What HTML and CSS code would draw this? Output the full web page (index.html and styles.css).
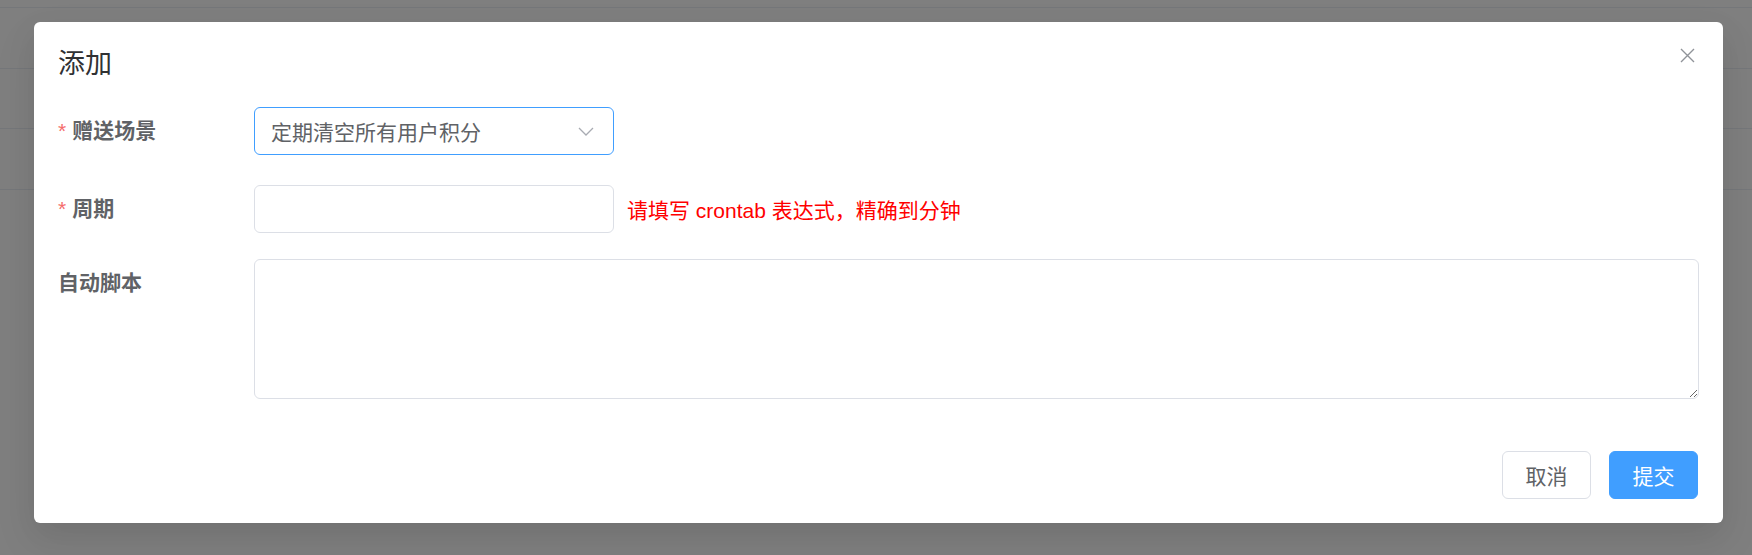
FILE: index.html
```html
<!DOCTYPE html>
<html lang="zh-CN">
<head>
<meta charset="utf-8">
<title>添加</title>
<link rel="stylesheet" href="styles.css">
</head>
<body>
<div class="page">
  <div class="page-row"></div>
  <div class="page-row"></div>
  <div class="page-row"></div>
  <div class="page-row"></div>
</div>
<div class="overlay">
  <div class="dialog">
    <div class="dialog-header">
      <span class="dialog-title">添加</span>
      <button class="dialog-close" type="button" aria-label="关闭">
        <svg width="15" height="15" viewBox="0 0 15 15"><path d="M1 1 L14 14 M14 1 L1 14" stroke="#909399" stroke-width="1.4" fill="none"/></svg>
      </button>
    </div>
    <div class="dialog-body">
      <div class="form-item item-scene">
        <label class="form-label"><span class="req">*</span>赠送场景</label>
        <div class="form-content">
          <div class="select">
            <span class="select-value">定期清空所有用户积分</span>
            <svg class="select-arrow" width="16" height="9" viewBox="0 0 16 9"><path d="M1 1 L8 8 L15 1" stroke="#a8abb2" stroke-width="1.3" fill="none"/></svg>
          </div>
        </div>
      </div>
      <div class="form-item item-cycle">
        <label class="form-label"><span class="req">*</span>周期</label>
        <div class="form-content">
          <input class="input" type="text">
          <span class="hint">请填写 crontab 表达式，精确到分钟</span>
        </div>
      </div>
      <div class="form-item item-script">
        <label class="form-label">自动脚本</label>
        <div class="form-content">
          <textarea class="textarea"></textarea>
        </div>
      </div>
    </div>
    <div class="dialog-footer">
      <button class="btn btn-default" type="button">取消</button>
      <button class="btn btn-primary" type="button">提交</button>
    </div>
  </div>
</div>
</body>
</html>
```

FILE: styles.css
```css
* {
  box-sizing: border-box;
}

html, body {
  margin: 0;
  padding: 0;
  height: 555px;
  overflow: hidden;
}

body {
  background: #ffffff;
  font-family: "Liberation Sans", "Noto Sans CJK SC", sans-serif;
  position: relative;
}

.page {
  display: flex;
  flex-direction: column;
  padding-top: 7px;
}

.page-row {
  height: 60.5px;
  border-top: 1px solid #ebeef5;
}

.overlay {
  position: absolute;
  inset: 0;
  background: rgba(0, 0, 0, 0.5);
}

.dialog {
  position: absolute;
  left: 34px;
  top: 22px;
  width: 1689px;
  height: 501px;
  background: #ffffff;
  border-radius: 6px;
  padding: 24px;
  box-shadow: 0 18px 48px 6px rgba(0, 0, 0, 0.04), 0 12px 30px rgba(0, 0, 0, 0.08);
  display: flex;
  flex-direction: column;
}

.dialog-header {
  padding-bottom: 25px;
}

.dialog-title {
  display: block;
  font-size: 27px;
  line-height: 36px;
  color: #303133;
}

.dialog-close {
  position: absolute;
  top: 9px;
  right: 12px;
  width: 48px;
  height: 48px;
  border: 0;
  padding: 0;
  background: transparent;
  display: flex;
  align-items: center;
  justify-content: center;
}

.dialog-body {
  display: flex;
  flex-direction: column;
}

.form-item {
  display: grid;
  grid-template-columns: 196px 1fr;
  align-items: start;
}

.item-scene {
  margin-bottom: 30px;
}

.item-cycle {
  margin-bottom: 26px;
}

.form-label {
  font-size: 21px;
  line-height: 48px;
  font-weight: bold;
  color: #606266;
  display: flex;
  align-items: center;
}

.req {
  color: #f56c6c;
  margin-right: 6px;
  font-weight: normal;
}

.form-content {
  display: flex;
  align-items: center;
  gap: 13px;
}

.select {
  width: 360px;
  height: 48px;
  border: 1px solid #409eff;
  border-radius: 6px;
  display: flex;
  align-items: center;
  justify-content: space-between;
  padding: 0 19px 0 16px;
}

.select-value {
  font-size: 21px;
  color: #606266;
}

.input {
  width: 360px;
  height: 48px;
  border: 1px solid #dcdfe6;
  border-radius: 6px;
  background: #ffffff;
  font-size: 21px;
  padding: 0 16px;
  outline: none;
}

.hint {
  font-size: 21px;
  color: #ff0000;
}

.textarea {
  width: 1445px;
  height: 140px;
  border: 1px solid #dcdfe6;
  border-radius: 6px;
  font-size: 21px;
  padding: 8px 16px;
  resize: vertical;
  outline: none;
  font-family: inherit;
}

.dialog-footer {
  margin-top: auto;
  display: flex;
  justify-content: flex-end;
  gap: 18px;
  padding-right: 1px;
}

.btn {
  width: 89px;
  height: 48px;
  border-radius: 6px;
  font-size: 21px;
  font-family: inherit;
  cursor: pointer;
  padding: 0;
}

.btn-default {
  background: #ffffff;
  border: 1px solid #dcdfe6;
  color: #606266;
}

.btn-primary {
  background: #409eff;
  border: 1px solid #409eff;
  color: #ffffff;
}
```
